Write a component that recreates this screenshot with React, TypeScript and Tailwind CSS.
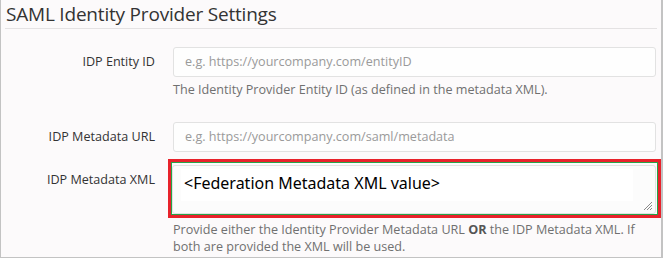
import React from "react";

function Label({ children, top }: { children: React.ReactNode; top?: boolean }) {
  return (
    <div
      className={`w-[154px] shrink-0 text-right text-[12.6px] leading-[20px] text-[#333] ${
        top ? "pt-[11px]" : ""
      }`}
    >
      {children}
    </div>
  );
}

function TextInput({ placeholder }: { placeholder: string }) {
  return (
    <div className="h-[30px] w-[483px] rounded-[3px] border border-[#e2e2e2] bg-[#fefefe] px-[11px] text-[12.6px] leading-[28px] text-[#9a9a9a]">
      {placeholder}
    </div>
  );
}

function ResizeGrip() {
  return (
    <svg width="12" height="12" viewBox="0 0 12 12" className="absolute bottom-[2px] right-[2px]">
      <path d="M11 3 L3 11 M11 6 L6 11 M11 9 L9 11" stroke="#8a8a8a" strokeWidth="1" />
    </svg>
  );
}

export default function App() {
  return (
    <div className="box-border h-[258px] w-[663px] border-b border-l border-r-2 border-[#c3c3c3] bg-[#fcfafb] font-['Open_Sans',sans-serif]">
      {/* Title */}
      <div className="mx-[4px] h-[29px] border-b border-[#e4e2e3] pl-[1px] text-[19px] leading-[28px] tracking-[-0.2px] text-[#333]">
        SAML Identity Provider Settings
      </div>

      {/* Entity ID */}
      <div className="mt-[18px] flex items-center gap-[18px]">
        <Label>IDP Entity ID</Label>
        <TextInput placeholder="e.g. https://yourcompany.com/entityID" />
      </div>
      <div className="ml-[172px] mt-[3px] text-[12.6px] leading-[20px] text-[#707070]">
        The Identity Provider Entity ID (as defined in the metadata XML).
      </div>

      {/* Metadata URL */}
      <div className="mt-[22px] flex items-center gap-[18px]">
        <Label>IDP Metadata URL</Label>
        <TextInput placeholder="e.g. https://yourcompany.com/saml/metadata" />
      </div>

      {/* Metadata XML */}
      <div className="mt-[7px] flex items-start gap-[13px]">
        <Label top>IDP Metadata XML</Label>
        <div className="h-[59px] w-[493px] border-[3px] border-[#e8222b]">
          <div className="h-full border border-[#27a348] pt-[2px]">
            <div className="relative h-[49px] w-[484px] rounded-[3px] border border-[#e2e2e2] bg-[#fcfcfc]">
              <div className="ml-[8px] mt-[3px] mr-[22px] h-[32px] bg-white pl-[3px] font-['Noto_Sans',sans-serif] text-[16px] leading-[28px] text-black">
                &lt;Federation Metadata XML value&gt;
              </div>
              <ResizeGrip />
            </div>
          </div>
        </div>
      </div>
      <div className="ml-[172px] mr-[8px] mt-[3px] text-[12.6px] leading-[17px] text-[#707070]">
        Provide either the Identity Provider Metadata URL <span className="font-bold text-[#555]">OR</span> the IDP Metadata XML. If
        <br />
        both are provided the XML will be used.
      </div>
    </div>
  );
}
